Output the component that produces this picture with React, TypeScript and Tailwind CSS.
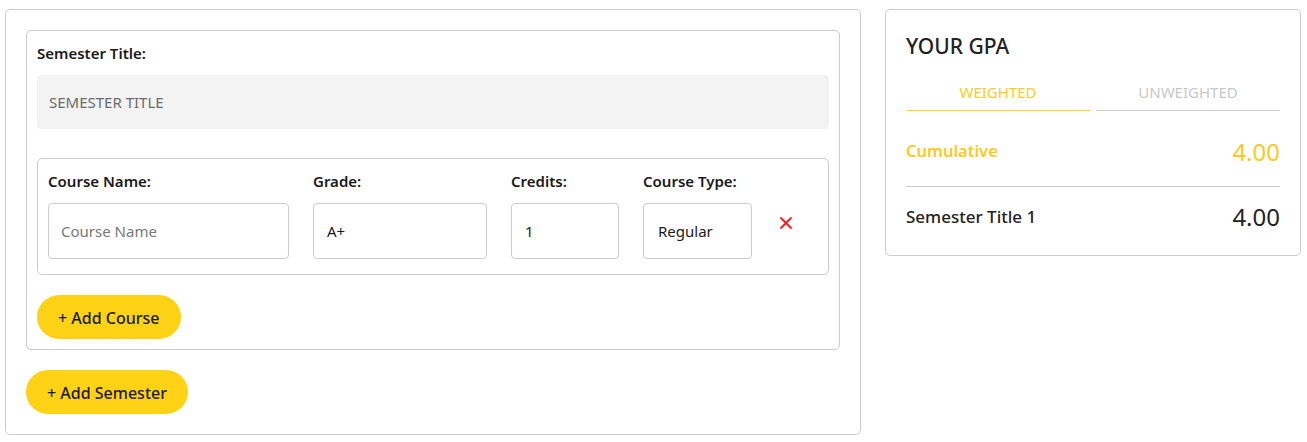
import React from "react";
import { X } from "lucide-react";

const App: React.FC = () => {
  return (
    <div className="flex items-start gap-[24px] bg-white pl-[5px] pt-[9px] text-[#1a1a1a] font-['Noto_Sans',_'Open_Sans',_sans-serif]">
      {/* SEMESTERS */}
      <div className="w-[856px] rounded-[5px] border border-[#cccccc] px-5 pt-5 pb-5">
        <div className="rounded-[5px] border border-[#cccccc] px-[10px] pt-[11px] pb-[10px]">
          <label className="block text-[15px] font-semibold leading-[22px]">Semester Title:</label>
          <input
            placeholder="SEMESTER TITLE"
            className="mt-[11px] h-[54px] w-full rounded-[4px] bg-[#f3f3f3] px-3 text-[15px] text-[#333] placeholder:text-[#6b6b6b] outline-none"
          />

          {/* COURSE ROW */}
          <div className="mt-[29px] flex items-end gap-[24px] rounded-[5px] border border-[#cccccc] px-[10px] pt-[11px] pb-[15px]">
            <div className="flex w-[241px] flex-col gap-[11px]">
              <label className="text-[15px] font-semibold leading-[22px]">Course Name:</label>
              <input
                placeholder="Course Name"
                className="h-[56px] w-full rounded-[4px] border border-[#cccccc] px-3 text-[15px] placeholder:text-[#777] outline-none"
              />
            </div>
            <div className="flex w-[174px] flex-col gap-[11px]">
              <label className="text-[15px] font-semibold leading-[22px]">Grade:</label>
              <div className="flex h-[56px] items-center rounded-[4px] border border-[#cccccc] px-[13px] text-[15px]">A+</div>
            </div>
            <div className="flex w-[108px] flex-col gap-[11px]">
              <label className="text-[15px] font-semibold leading-[22px]">Credits:</label>
              <div className="flex h-[56px] items-center rounded-[4px] border border-[#cccccc] px-[13px] text-[15px]">1</div>
            </div>
            <div className="flex w-[109px] flex-col gap-[11px]">
              <label className="text-[15px] font-semibold leading-[22px]">Course Type:</label>
              <div className="flex h-[56px] items-center rounded-[4px] border border-[#cccccc] px-[14px] text-[15px]">Regular</div>
            </div>
            <button className="mb-[26px] text-[#ff1a1a]">
              <X className="h-[20px] w-[20px]" strokeWidth={2.2} />
            </button>
          </div>

          <button className="mt-[20px] h-[44px] rounded-full bg-[#ffd215] px-[21px] pt-[1px] text-[16px] font-medium">
            + Add Course
          </button>
        </div>

        <button className="mt-[20px] h-[44px] rounded-full bg-[#ffd215] px-[21px] pt-[1px] text-[16px] font-medium">
          + Add Semester
        </button>
      </div>

      {/* GPA */}
      <div className="w-[416px] rounded-[5px] border border-[#cccccc] px-5 pt-[22px] pb-[20px]">
        <h2 className="text-[21px] font-medium leading-[28px] text-[#222]">YOUR GPA</h2>
        <div className="mt-[21px] flex gap-[6px]">
          <div className="flex-1 border-b-[1.5px] border-[#ffd015] pb-[6px] text-center text-[15px] text-[#ffcc1a]">WEIGHTED</div>
          <div className="flex-1 border-b-[1.5px] border-[#cccccc] pb-[6px] text-center text-[15px] text-[#c8c8c8]">UNWEIGHTED</div>
        </div>
        <div className="flex items-center justify-between border-b border-[#cccccc] pt-[23px] pb-[16px]">
          <span className="text-[16.5px] font-semibold text-[#ffc91a]">Cumulative</span>
          <span className="text-[24px] text-[#ffc91a]">4.00</span>
        </div>
        <div className="flex items-center justify-between pt-[12px]">
          <span className="text-[17px] font-medium text-[#222]">Semester Title 1</span>
          <span className="text-[24px] text-[#222]">4.00</span>
        </div>
      </div>
    </div>
  );
};

export default App;
